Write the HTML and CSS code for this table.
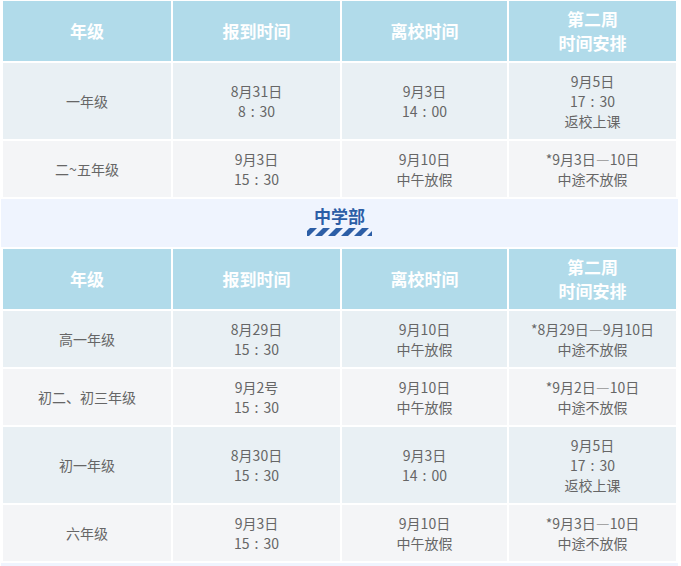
FILE: index.html
```html
<!DOCTYPE html>
<html lang="zh-CN">
<head>
<meta charset="utf-8">
<title>报到时间安排</title>
<link rel="stylesheet" href="styles.css">
</head>
<body>
<div class="page">
  <table class="sched">
    <colgroup><col class="c1"><col class="c2"><col class="c3"><col class="c4"></colgroup>
    <thead>
      <tr class="head"><th>年级</th><th>报到时间</th><th>离校时间</th><th>第二周<br>时间安排</th></tr>
    </thead>
    <tbody>
      <tr class="odd tall"><td>一年级</td><td>8月31日<br>8<span class="colon">:</span>30</td><td>9月3日<br>14<span class="colon">:</span>00</td><td>9月5日<br>17<span class="colon">:</span>30<br>返校上课</td></tr>
      <tr class="even"><td>二~五年级</td><td>9月3日<br>15<span class="colon">:</span>30</td><td>9月10日<br>中午放假</td><td>*9月3日—10日<br>中途不放假</td></tr>
    </tbody>
  </table>

  <div class="band">
    <div class="band-title">中学部</div>
    <svg class="stripes" width="65" height="8" viewBox="0 0 65 8" aria-hidden="true">
      <polygon points="-5,8 2,8 10,0 3,0"/>
      <polygon points="8,8 15,8 23,0 16,0"/>
      <polygon points="21,8 28,8 36,0 29,0"/>
      <polygon points="34,8 41,8 49,0 42,0"/>
      <polygon points="47,8 54,8 62,0 55,0"/>
      <polygon points="60,8 67,8 75,0 68,0"/>
    </svg>
  </div>

  <table class="sched">
    <colgroup><col class="c1"><col class="c2"><col class="c3"><col class="c4"></colgroup>
    <thead>
      <tr class="head"><th>年级</th><th>报到时间</th><th>离校时间</th><th>第二周<br>时间安排</th></tr>
    </thead>
    <tbody>
      <tr class="odd"><td>高一年级</td><td>8月29日<br>15<span class="colon">:</span>30</td><td>9月10日<br>中午放假</td><td>*8月29日—9月10日<br>中途不放假</td></tr>
      <tr class="even"><td>初二、初三年级</td><td>9月2号<br>15<span class="colon">:</span>30</td><td>9月10日<br>中午放假</td><td>*9月2日—10日<br>中途不放假</td></tr>
      <tr class="odd tall"><td>初一年级</td><td>8月30日<br>15<span class="colon">:</span>30</td><td>9月3日<br>14<span class="colon">:</span>00</td><td>9月5日<br>17<span class="colon">:</span>30<br>返校上课</td></tr>
      <tr class="even"><td>六年级</td><td>9月3日<br>15<span class="colon">:</span>30</td><td>9月10日<br>中午放假</td><td>*9月3日—10日<br>中途不放假</td></tr>
    </tbody>
  </table>

  <div class="band"></div>
</div>
</body>
</html>
```

FILE: styles.css
```css
html, body {
  margin: 0;
  padding: 0;
  background: #ffffff;
}

body {
  font-family: "Noto Sans CJK SC", "Noto Sans", sans-serif;
  color: #666666;
}

.page {
  width: 677px;
  margin: -1px 0 0 1px;
}

.sched {
  width: 677px;
  table-layout: fixed;
  border-collapse: separate;
  border-spacing: 2px;
}

.c1 { width: 168px; }
.c2 { width: 167px; }
.c3 { width: 165px; }
.c4 { width: 167px; }

.sched th,
.sched td {
  padding: 0 2px;
  text-align: center;
  vertical-align: middle;
}

.head th {
  height: 60px;
  background: #b1dbea;
  color: #ffffff;
  font-size: 17px;
  font-weight: 700;
  line-height: 24px;
}

.sched td {
  height: 56px;
  font-size: 14px;
  line-height: 20px;
  color: #666666;
}

.colon {
  display: inline-block;
  padding: 0 5px;
}

.sched tr.tall td {
  height: 76px;
}

.odd td {
  background: #e9f0f4;
}

.even td {
  background: #f4f5f7;
}

.band {
  height: 48px;
  background: #eff4fe;
  display: flex;
  flex-direction: column;
  align-items: center;
  padding-top: 6px;
  box-sizing: border-box;
}

.band-title {
  font-size: 17px;
  font-weight: 700;
  color: #2c5ea6;
  line-height: 22px;
}

.stripes {
  display: block;
  margin-top: 1px;
  fill: #2c5ea6;
}
```
